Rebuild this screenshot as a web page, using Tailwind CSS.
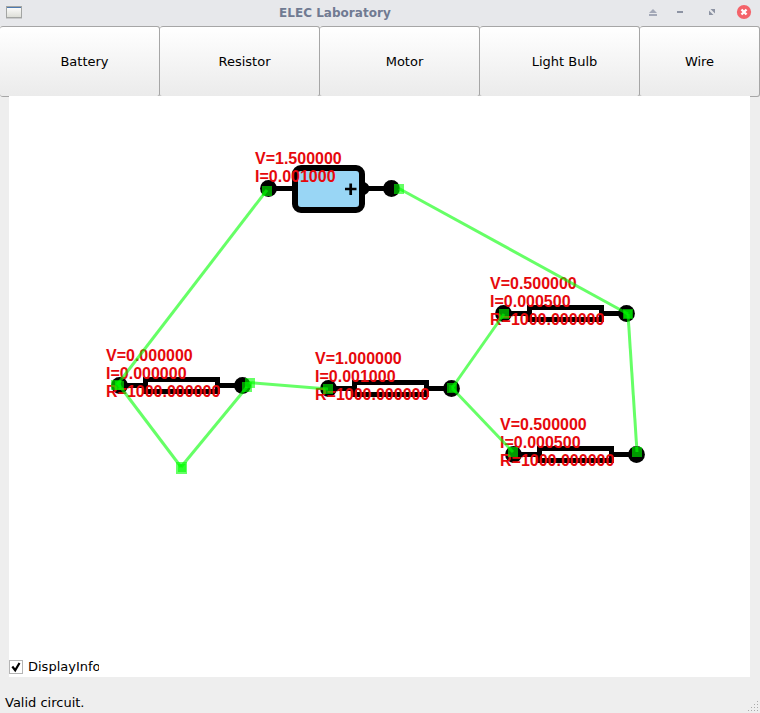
<!DOCTYPE html>
<html lang="en">
<head>
<meta charset="utf-8">
<title>ELEC Laboratory</title>
<script src="https://cdn.jsdelivr.net/npm/@tailwindcss/browser@4"></script>
</head>
<body class="w-[760px] h-[713px] overflow-hidden flex flex-col bg-[#eeeeee] font-['DejaVu_Sans',sans-serif] text-[13px] text-black">
<header class="h-[26px] shrink-0 bg-[#e7e8eb] grid grid-cols-[279px_1fr_auto] items-center">
  <svg class="ml-[6px]" width="16" height="14" viewBox="0 0 16 14">
    <defs><linearGradient id="w" x2="0" y2="1"><stop offset="0" stop-color="#fff"/><stop offset="1" stop-color="#dcddd6"/></linearGradient></defs>
    <rect x=".5" y=".5" width="15" height="11" fill="url(#w)" stroke="#a3a5a3"/><rect x="1" y="1" width="14" height="1" fill="#4d7ab0"/><rect y="12" width="16" height="1" fill="#c9cacc"/>
  </svg>
  <h1 class="font-bold text-[12px] leading-[26px] tracking-[0.03px] text-[#707a92]">ELEC Laboratory</h1>
  <svg width="120" height="26" viewBox="640 0 120 26">
    <path d="M653 9l4 4h-8z M649 14h8v2h-8z" fill="#a3a8b7"/>
    <path d="M677 11h6v2h-6z" fill="#8d93a3"/>
    <path d="M710.500 9h4.500v4.500z M709 10.500v4.500h4.500z" fill="#8d93a3"/>
    <circle cx="744" cy="12" r="7.100" fill="#f4636a"/><path d="M741.500 9.500l5 5m0-5l-5 5" stroke="#fff" stroke-width="2.400"/>
  </svg>
</header>
<nav class="h-[71px] shrink-0 flex">
  <button class="w-[160px] border border-l-0 border-[#a6a6a6] rounded-[3px] bg-linear-to-b from-white to-[#ebebeb] pl-[10px]">Battery</button>
  <button class="w-[160px] border border-l-0 border-[#a6a6a6] rounded-[3px] bg-linear-to-b from-white to-[#ebebeb] pl-[10px]">Resistor</button>
  <button class="w-[160px] border border-l-0 border-[#a6a6a6] rounded-[3px] bg-linear-to-b from-white to-[#ebebeb] pl-[10px]">Motor</button>
  <button class="w-[160px] border border-l-0 border-[#a6a6a6] rounded-[3px] bg-linear-to-b from-white to-[#ebebeb] pl-[10px]">Light Bulb</button>
  <button class="w-[120px] border border-l-0 border-[#a6a6a6] rounded-[3px] bg-linear-to-b from-white to-[#ebebeb]">Wire</button>
</nav>
<main class="relative -mt-px ml-[9px] w-[741px] h-[581px] shrink-0 bg-white flex flex-col justify-end">
  <svg class="absolute inset-0 font-['Liberation_Sans',sans-serif] font-bold text-[16px]" width="741" height="581" viewBox="9 96 741 581">
    <defs>
      <g id="res"><path d="M119 385.500h26M218 385.500h24" stroke="#000" stroke-width="5"/><rect x="145.500" y="379.500" width="72" height="12" fill="#fff" stroke="#000" stroke-width="5"/><circle cx="119.500" cy="385.500" r="8.400"/><circle cx="242.500" cy="385.500" r="8.400"/></g>
    </defs>
    <path d="M268 188.500h26M366 188.500h24" stroke="#000" stroke-width="5"/>
    <circle cx="363" cy="188.500" r="6.500"/>
    <rect x="295" y="168" width="67" height="42" rx="6" fill="#99d6f5" stroke="#000" stroke-width="6"/>
    <path d="M345 189h11.500M350.700 183.500v11.500" stroke="#000" stroke-width="2.700"/>
    <circle cx="268.500" cy="188.500" r="8.400"/><circle cx="391.500" cy="188.500" r="8.400"/>
    <use href="#res"/><use href="#res" x="209" y="3"/><use href="#res" x="384" y="-72"/><use href="#res" x="394" y="69"/>
    <g fill="#e6080c">
      <text x="255" y="164">V=1.500000</text><text x="255" y="182">I=0.001000</text>
      <text x="106" y="361">V=0.000000</text><text x="106" y="379">I=0.000000</text><text x="106" y="397">R=1000.000000</text>
      <text x="315" y="364">V=1.000000</text><text x="315" y="382">I=0.001000</text><text x="315" y="400">R=1000.000000</text>
      <text x="490" y="289">V=0.500000</text><text x="490" y="307">I=0.000500</text><text x="490" y="325">R=1000.000000</text>
      <text x="500" y="430">V=0.500000</text><text x="500" y="448">I=0.000500</text><text x="500" y="466">R=1000.000000</text>
    </g>
    <g fill="none" stroke="#00ff00" stroke-opacity=".6" stroke-width="3">
      <path d="M267 190L117 385"/><path d="M399 188.500L628 314"/><path d="M119 385L181 467"/><path d="M181 467L247 387"/><path d="M249 382.500L328 389"/><path d="M452 388L504 314"/><path d="M452 388L513 452"/><path d="M628 314L637 452"/>
    </g>
    <g fill="#00ff00" fill-opacity=".6">
      <path d="M262 186h10v10h-10z"/><path d="M111 380h10v10h-10z"/><path d="M394 184h10v10h-10z"/><path d="M623 309h10v10h-10z"/>
      <path d="M115 381h9v9h-9z"/><path d="M176 462h11v12h-11z"/><path d="M178 464h8v8h-8z"/><path d="M242 382h10v10h-10z"/>
      <path d="M245 378h10v10h-10z"/><path d="M323 384h10v10h-10z"/><path d="M447 383h10v10h-10z"/><path d="M449 385h7v7h-7z" fill-opacity=".4"/>
      <path d="M499 309h10v10h-10z"/><path d="M508 447h10v10h-10z"/><path d="M624 310h8v8h-8z" fill-opacity=".5"/><path d="M632 447h10v10h-10z"/>
    </g>
  </svg>
  <label class="relative flex items-center gap-[5px] h-[21px] w-[90px] overflow-hidden whitespace-nowrap">
    <svg class="shrink-0" width="14" height="14" viewBox="0 0 14 14"><rect x=".5" y=".5" width="13" height="13" fill="#fff" stroke="#b5b5b5"/><path d="M3.300 6.500L6.200 10.200L10.500 3" fill="none" stroke="#000" stroke-width="2.200"/></svg>
    <span>DisplayInfo</span>
  </label>
</main>
<footer class="flex-1 flex items-end justify-between pl-[5px]">
  <span class="leading-[20px]">Valid circuit.</span>
  <svg width="13" height="13" viewBox="0 0 13 13"><path d="M10 1h1v1h-1zM7 4h1v1h-1zM10 4h1v1h-1zM4 7h1v1h-1zM7 7h1v1h-1zM10 7h1v1h-1zM1 10h1v1h-1zM4 10h1v1h-1zM7 10h1v1h-1zM10 10h1v1h-1z" fill="#aaa"/></svg>
</footer>
</body>
</html>
